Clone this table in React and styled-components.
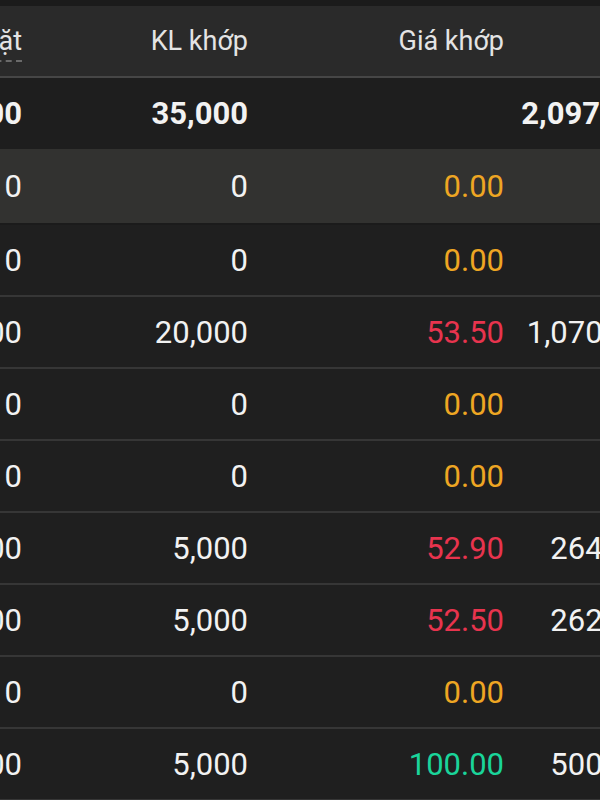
import React from "react";
import styled, { createGlobalStyle } from "styled-components";

const Global = createGlobalStyle`
  html, body { margin: 0; padding: 0; background: #1f1f1f; overflow: hidden; }
  body { font-family: Roboto, "Noto Sans", "Liberation Sans", sans-serif; }
`;

const Viewport = styled.div`
  width: 600px;
  height: 800px;
  overflow: hidden;
  padding-top: 6px;
  box-sizing: border-box;
  background: linear-gradient(#1b1b1b 0 6px, #1f1f1f 6px);
`;

const Table = styled.div`
  margin-left: -80px;
  width: 757px;
  display: flex;
  flex-direction: column;
`;

const COLS = "118px 226px 256px 157px";

const HeaderRow = styled.div`
  display: grid;
  grid-template-columns: ${COLS};
  height: 70px;
  align-items: center;
  background: #2a2a2a;
  border-bottom: 2px solid #464646;
`;

const Row = styled.div`
  display: grid;
  grid-template-columns: ${COLS};
  align-items: center;
  height: ${(p) => p.$h}px;
  background: ${(p) => p.$bg};
  border-bottom: ${(p) => (p.$line ? `2px solid ${p.$line}` : "none")};
  font-weight: ${(p) => (p.$bold ? 700 : 400)};
`;

const HeadCell = styled.div`
  text-align: right;
  padding-right: 16px;
  font-size: 27px;
  color: #e4e4e4;
  white-space: nowrap;
`;

const Dotted = styled.span`
  border-bottom: 2px dashed #6a6a6a;
  padding-bottom: 3px;
`;

const colors = {
  white: "#f2f2f2",
  ref: "#eea623",
  down: "#e8344e",
  up: "#1ad49a",
};

const Cell = styled.div`
  text-align: right;
  padding-right: 16px;
  font-size: 31px;
  white-space: nowrap;
  color: ${(p) => colors[p.$tone || "white"]};
`;

const rows = [
  ["0", "0", "0.00", "ref", ""],
  ["20,000", "20,000", "53.50", "down", "1,070,000"],
  ["0", "0", "0.00", "ref", ""],
  ["0", "0", "0.00", "ref", ""],
  ["5,000", "5,000", "52.90", "down", "264,500"],
  ["5,000", "5,000", "52.50", "down", "262,500"],
  ["0", "0", "0.00", "ref", ""],
  ["5,000", "5,000", "100.00", "up", "500,000"],
];

export default function App() {
  return (
    <>
      <Global />
      <Viewport>
        <Table>
          <HeaderRow>
            <HeadCell>
              <Dotted>KL đặt</Dotted>
            </HeadCell>
            <HeadCell>KL khớp</HeadCell>
            <HeadCell>Giá khớp</HeadCell>
            <HeadCell>GT</HeadCell>
          </HeaderRow>
          <Row $h={71} $bg="#1e1e1e" $bold>
            <Cell>35,000</Cell>
            <Cell>35,000</Cell>
            <Cell></Cell>
            <Cell>2,097,000</Cell>
          </Row>
          <Row $h={74} $bg="#323230" $line="#1b1b1b">
            <Cell>0</Cell>
            <Cell>0</Cell>
            <Cell $tone="ref">0.00</Cell>
            <Cell></Cell>
          </Row>
          {rows.map((r, i) => (
            <Row key={i} $h={70} $bg="#1f1f1f" $line="#363636">
              <Cell>{r[0]}</Cell>
              <Cell>{r[1]}</Cell>
              <Cell $tone={r[3]}>{r[2]}</Cell>
              <Cell>{r[4]}</Cell>
            </Row>
          ))}
        </Table>
      </Viewport>
    </>
  );
}
